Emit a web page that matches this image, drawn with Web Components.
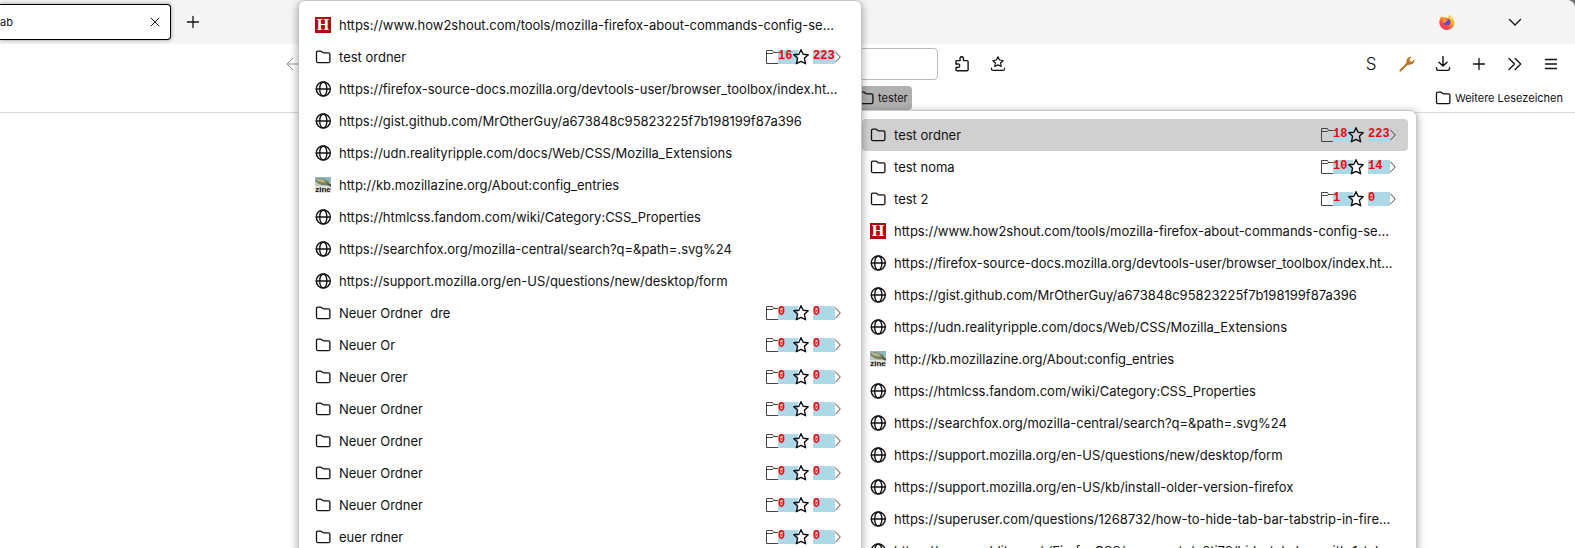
<!DOCTYPE html>
<html lang="de">
<head>
<meta charset="utf-8">
<title>Lesezeichen</title>
<style>
    html { background: #6e6e6e; }
    body {
        margin: 0;
        height: 100vh;
        overflow: hidden;
        position: relative;
        background: #fff;
        border-top-right-radius: 8px;
        font-family: Inter, "Liberation Sans", sans-serif;
        font-size: 13px;
        color: #111;
    }
    bookmark-menu.sub { left: 298px; top: 0; z-index: 2; }
    bookmark-menu.main { left: 853px; top: 110px; z-index: 1; }
</style>
</head>
<body>
    <tab-strip>ab</tab-strip>
    <nav-bar></nav-bar>
    <bookmarks-bar></bookmarks-bar>

    <bookmark-menu class="main">
        <bookmark-folder folders="18" links="223" active>test ordner</bookmark-folder>
        <bookmark-folder folders="10" links="14">test noma</bookmark-folder>
        <bookmark-folder folders="1" links="0">test 2</bookmark-folder>
        <bookmark-link icon="shout">https://www.how2shout.com/tools/mozilla-firefox-about-commands-config-se…</bookmark-link>
        <bookmark-link>https://firefox-source-docs.mozilla.org/devtools-user/browser_toolbox/index.ht…</bookmark-link>
        <bookmark-link>https://gist.github.com/MrOtherGuy/a673848c95823225f7b198199f87a396</bookmark-link>
        <bookmark-link>https://udn.realityripple.com/docs/Web/CSS/Mozilla_Extensions</bookmark-link>
        <bookmark-link icon="zine">http://kb.mozillazine.org/About:config_entries</bookmark-link>
        <bookmark-link>https://htmlcss.fandom.com/wiki/Category:CSS_Properties</bookmark-link>
        <bookmark-link>https://searchfox.org/mozilla-central/search?q=&amp;path=.svg%24</bookmark-link>
        <bookmark-link>https://support.mozilla.org/en-US/questions/new/desktop/form</bookmark-link>
        <bookmark-link>https://support.mozilla.org/en-US/kb/install-older-version-firefox</bookmark-link>
        <bookmark-link>https://superuser.com/questions/1268732/how-to-hide-tab-bar-tabstrip-in-fire…</bookmark-link>
        <bookmark-link>https://www.reddit.com/r/FirefoxCSS/comments/q8ti78/hide_tab_bar_with_1_tab…</bookmark-link>
    </bookmark-menu>

    <bookmark-menu class="sub">
        <bookmark-link icon="shout">https://www.how2shout.com/tools/mozilla-firefox-about-commands-config-se…</bookmark-link>
        <bookmark-folder folders="16" links="223">test ordner</bookmark-folder>
        <bookmark-link>https://firefox-source-docs.mozilla.org/devtools-user/browser_toolbox/index.ht…</bookmark-link>
        <bookmark-link>https://gist.github.com/MrOtherGuy/a673848c95823225f7b198199f87a396</bookmark-link>
        <bookmark-link>https://udn.realityripple.com/docs/Web/CSS/Mozilla_Extensions</bookmark-link>
        <bookmark-link icon="zine">http://kb.mozillazine.org/About:config_entries</bookmark-link>
        <bookmark-link>https://htmlcss.fandom.com/wiki/Category:CSS_Properties</bookmark-link>
        <bookmark-link>https://searchfox.org/mozilla-central/search?q=&amp;path=.svg%24</bookmark-link>
        <bookmark-link>https://support.mozilla.org/en-US/questions/new/desktop/form</bookmark-link>
        <bookmark-folder folders="0" links="0">Neuer Ordner  dre</bookmark-folder>
        <bookmark-folder folders="0" links="0">Neuer Or</bookmark-folder>
        <bookmark-folder folders="0" links="0">Neuer Orer</bookmark-folder>
        <bookmark-folder folders="0" links="0">Neuer Ordner</bookmark-folder>
        <bookmark-folder folders="0" links="0">Neuer Ordner</bookmark-folder>
        <bookmark-folder folders="0" links="0">Neuer Ordner</bookmark-folder>
        <bookmark-folder folders="0" links="0">Neuer Ordner</bookmark-folder>
        <bookmark-folder folders="0" links="0">euer rdner</bookmark-folder>
    </bookmark-menu>

<script>
const stroke = (width) => `fill="none" stroke="currentColor" stroke-width="${width}" stroke-linecap="round" stroke-linejoin="round"`;

const icons = {
    folder: `<path ${stroke(1.3)} d="M1.500 12.200V3.600q0-1.400 1.400-1.400h2.900q.7 0 1.200.6l.7.8q.3.300.8.300h5q1.400 0 1.400 1.400v6.900q0 1.500-1.400 1.500H2.900q-1.400 0-1.400-1.500z"/>`,
    globe: `<g ${stroke(1.4)}><circle cx="8.300" cy="8" r="7"/><ellipse cx="8.300" cy="8" rx="3.600" ry="7"/><path d="M1.300 8h14"/></g>`,
    shout: `<path fill="#b4060c" d="M0 0h16v16H0z"/><text x="8" y="13" text-anchor="middle" font-family="Liberation Serif, serif" font-weight="bold" font-size="16" fill="#fff">H</text>`,
    zine: `<path fill="#8fb6c4" d="M0 0h16v7H0z"/><path fill="#bccbc9" d="M0 5h16v5H0z"/><path fill="#e6e3de" d="M0 9h16v7H0z"/>
        <ellipse cx="7.500" cy="4.800" rx="7" ry="3.200" fill="#77825a" transform="rotate(14 7.500 4.800)"/><ellipse cx="6" cy="3.600" rx="4.600" ry="1.400" fill="#b3b48c" transform="rotate(14 6 3.600)"/><path fill="#4f5b40" d="M12 6l4 1v3l-4-2z"/>
        <text x="8" y="15" text-anchor="middle" font-family="Liberation Sans, sans-serif" font-weight="bold" font-size="8" fill="#111">zine</text>`,
    close: `<path ${stroke(1)} d="M4 4l8 8M12 4l-8 8"/>`,
    plus: `<path ${stroke(1.3)} d="M8 2.500v11M2.500 8h11"/>`,
    back: `<path ${stroke(1)} d="M6.500 2.500L1 8l5.500 5.500M1 8h15"/>`,
    puzzle: `<path ${stroke(1.4)} d="M2 8.200V5.600q0-1 1-1h2.700c.5 0 .7-.5.500-.9-.6-1.300-.1-2.900 1.500-2.900s2.200 1.600 1.600 2.900c-.2.400 0 .9.500.9h3.300q1 0 1 1v8.200q0 1-1 1H3q-1 0-1-1v-1.900c0-.5.4-.7.900-.6 1.500.5 2.800-.1 2.800-1.600S4.400 7.500 2.900 8c-.5.200-.9.500-.9.200z"/>`,
    saved: `<g ${stroke(1.2)}><path d="M8 .8l1.600 3.200 3.500.5-2.500 2.500.6 3.500L8 8.900l-3.200 1.600.6-3.500-2.500-2.500 3.500-.5z"/><path d="M1.500 12.200v.7q0 1.500 1.500 1.500h10q1.500 0 1.500-1.500v-.7"/></g>`,
    wrench: `<path fill="none" stroke="#ba7420" stroke-width="2.200" stroke-linecap="round" d="M1.500 14.500l7-7"/><path fill="#ba7420" d="M12.800.8l-2.300 2.500.3 2 2.100.4 2.400-2.400c.5 3-1.400 5.400-4.300 5.200l-2 .8-2-2 .6-1.900C7.200 2.800 9.600.300 12.800.800z"/>`,
    download: `<path ${stroke(1.4)} d="M8 .6v9.400M4 6.200l4 3.900 4-3.900M1.500 11.700v1q0 1.700 1.700 1.700h9.600q1.700 0 1.700-1.700v-1"/>`,
    more: `<path ${stroke(1.3)} d="M2 2.500L7.500 8 2 13.500M8.200 2.500L13.700 8l-5.500 5.500"/>`,
    menu: `<path ${stroke(1.3)} d="M2.500 3.500h11M2.500 8h11M2.500 12.500h11"/>`,
    down: `<path ${stroke(1.3)} d="M2.500 5.500L8 11l5.500-5.500"/>`,
    star: `<path ${stroke(1.4)} d="M8 .7l2.100 4.500 5.100.6-3.800 3.500 1.200 5.400L8 12.300l-4.600 2.400 1.200-5.400L.8 5.800l5.100-.6z"/>`,
    firefox: `<defs><linearGradient id="fx" x1=".9" y1=".1" x2=".2" y2="1"><stop offset="0" stop-color="#fff04a"/><stop offset=".35" stop-color="#ffae1f"/><stop offset=".65" stop-color="#ff5a38"/><stop offset="1" stop-color="#ef1f72"/></linearGradient></defs>
        <path fill="url(#fx)" d="M10.500.200c1.200.8 1.800 1.900 2.100 2.900 1.600 1 3 3 3 5.300A7.500 7.500 0 0 1 8 15.900 7.600 7.600 0 0 1 .3 8.200C.3 6 1.200 4.200 2.200 3l.5-1 .9 1.300c1-.4 1.800-.4 2.700-.1L9 4z"/>
        <circle cx="8" cy="8.100" r="3.500" fill="#7140d8"/><path fill="#ff9b22" d="M3.500 5.300c1.300-1 3-.9 4 .2l2 .3c-.1.900-1.800 1.200-2.400 1.700-.6.600-.1 1.500-1.500 1.400-1.300-.1-2-1.600-2.100-3.600z"/>`
};

class FxIcon extends HTMLElement {
    constructor() {
        super();
        this.attachShadow({ mode: "open" });
    }

    connectedCallback() {
        this.shadowRoot.innerHTML = `
            <style>
                :host { display: block; flex: none; width: 16px; height: 16px; }
                svg { display: block; width: 100%; height: 100%; }
            </style>
            <svg viewBox="0 0 16 16" aria-hidden="true">${icons[this.getAttribute("name")]}</svg>
        `;
    }
}

// Todos los botones comparten este reset
const controls = `
    button {
        display: flex;
        align-items: center;
        justify-content: center;
        padding: 0;
        border: 0;
        background: none;
        font: inherit;
        color: inherit;
    }
`;

class TabStrip extends HTMLElement {
    constructor() {
        super();
        this.attachShadow({ mode: "open" });
    }

    connectedCallback() {
        this.shadowRoot.innerHTML = `
            <style>
                ${controls}
                :host {
                    display: flex;
                    align-items: center;
                    height: 44px;
                    background: #f5f5f5;
                    border-top-right-radius: 8px;
                    font-size: 11px;
                }
                .tab {
                    display: flex;
                    align-items: center;
                    justify-content: space-between;
                    box-sizing: border-box;
                    width: 171px;
                    height: 36px;
                    padding-right: 7px;
                    border: 1px solid #000;
                    border-left: 0;
                    border-radius: 0 4px 4px 0;
                    background: #fff;
                    box-shadow: 0 0 4px rgba(0, 0, 0, .4);
                    color: #15141a;
                }
                .tab button { width: 16px; height: 16px; }
                .new { width: 43px; height: 32px; }
                .spring { flex: 1; }
                .app { margin-right: 44px; }
                .list { width: 32px; height: 32px; margin-right: 44px; }
            </style>
            <div class="tab"><span><slot></slot></span><button aria-label="Tab schließen"><fx-icon name="close"></fx-icon></button></div>
            <button class="new" aria-label="Neuer Tab"><fx-icon name="plus"></fx-icon></button>
            <div class="spring"></div>
            <fx-icon class="app" name="firefox"></fx-icon>
            <button class="list" aria-label="Alle Tabs"><fx-icon name="down"></fx-icon></button>
        `;
    }
}

class NavBar extends HTMLElement {
    constructor() {
        super();
        this.attachShadow({ mode: "open" });
    }

    connectedCallback() {
        this.shadowRoot.innerHTML = `
            <style>
                ${controls}
                :host { display: flex; align-items: center; height: 40px; padding-right: 6px; }
                button { flex: none; width: 36px; height: 32px; }
                .spring { flex: 274; }
                .rest { flex: 334; }
                input {
                    flex: 614;
                    min-width: 0;
                    box-sizing: border-box;
                    height: 32px;
                    margin-right: 6px;
                    border: 1px solid #bbb;
                    border-radius: 4px;
                    background: #fff;
                    font: inherit;
                }
                .back { color: #999; }
                .style { font-size: 17px; font-weight: 300; }
            </style>
            <div class="spring"></div>
            <button class="back" aria-label="Zurück"><fx-icon name="back"></fx-icon></button>
            <input type="text" aria-label="Adresse">
            <button aria-label="Erweiterungen"><fx-icon name="puzzle"></fx-icon></button>
            <button aria-label="Lesezeichen"><fx-icon name="saved"></fx-icon></button>
            <div class="rest"></div>
            <button class="style">S</button>
            <button aria-label="Werkzeuge"><fx-icon name="wrench"></fx-icon></button>
            <button aria-label="Downloads"><fx-icon name="download"></fx-icon></button>
            <button aria-label="Neuer Tab"><fx-icon name="plus"></fx-icon></button>
            <button aria-label="Weitere Werkzeuge"><fx-icon name="more"></fx-icon></button>
            <button aria-label="Menü"><fx-icon name="menu"></fx-icon></button>
        `;
    }
}

class BookmarksBar extends HTMLElement {
    constructor() {
        super();
        this.attachShadow({ mode: "open" });
    }

    connectedCallback() {
        this.shadowRoot.innerHTML = `
            <style>
                ${controls}
                :host {
                    display: flex;
                    justify-content: space-between;
                    padding: 2px 8px 2px 854px;
                    border-bottom: 1px solid #d8d8d8;
                    font-size: 11px;
                }
                button { height: 24px; gap: 4px; padding: 0 4px; border-radius: 4px; white-space: nowrap; }
                .open { background: #b0b0b0; }
            </style>
            <button class="open"><fx-icon name="folder"></fx-icon>tester</button>
            <button><fx-icon name="folder"></fx-icon>Weitere Lesezeichen</button>
        `;
    }
}

class BookmarkMenu extends HTMLElement {
    constructor() {
        super();
        this.attachShadow({ mode: "open" });
    }

    connectedCallback() {
        this.shadowRoot.innerHTML = `
            <style>
                :host {
                    display: block;
                    position: absolute;
                    box-sizing: border-box;
                    width: 564px;
                    padding: 8px;
                    border: 1px solid #c8c8c8;
                    border-radius: 7px;
                    background: #fff;
                    box-shadow: 0 2px 9px rgba(0, 0, 0, .38);
                }
            </style>
            <slot></slot>
        `;
    }
}

const row = `
    :host { display: block; }
    .row {
        display: flex;
        align-items: center;
        box-sizing: border-box;
        width: 100%;
        height: 32px;
        padding: 0 12px 0 8px;
        border-radius: 4px;
        color: inherit;
        text-decoration: none;
    }
    .label { flex: 1; margin-left: 8px; text-align: left; white-space: pre; }
`;

class BookmarkLink extends HTMLElement {
    constructor() {
        super();
        this.attachShadow({ mode: "open" });
    }

    connectedCallback() {
        const icon = this.getAttribute("icon") || "globe";
        this.shadowRoot.innerHTML = `
            <style>${row}</style>
            <a class="row" href="#"><fx-icon name="${icon}"></fx-icon><span class="label"><slot></slot></span></a>
        `;
    }
}

class BookmarkFolder extends HTMLElement {
    constructor() {
        super();
        this.attachShadow({ mode: "open" });
    }

    connectedCallback() {
        this.shadowRoot.innerHTML = `
            <style>
                ${controls}
                ${row}
                :host([active]) .row { background: #d0d0d0; }
                .counts { display: flex; align-items: center; }
                .counts svg { display: block; flex: none; fill: none; stroke: #444; }
                .num {
                    width: 22px;
                    height: 14px;
                    background: #add8e6;
                    color: #f00;
                    font: bold 12px/13px "Liberation Mono", monospace;
                    text-align: left;
                }
                .folders { width: 20px; }
                .star { position: relative; margin: 0 4px 0 -5px; }
            </style>
            <button class="row">
                <fx-icon name="folder"></fx-icon>
                <span class="label"><slot></slot></span>
                <span class="counts">
                    <svg width="12" height="14" viewBox="0 0 12 14"><path d="M12 13.500H.5V.5h6l1 2H12M.5 3.500h6l1-1"/></svg>
                    <span class="num folders">${this.getAttribute("folders")}</span>
                    <fx-icon class="star" name="star"></fx-icon>
                    <span class="num">${this.getAttribute("links")}</span>
                    <svg width="6" height="14" viewBox="0 0 6 14"><path d="M0 1.500L5.300 7 0 12.500"/></svg>
                </span>
            </button>
        `;
    }
}

customElements.define("fx-icon", FxIcon);
customElements.define("tab-strip", TabStrip);
customElements.define("nav-bar", NavBar);
customElements.define("bookmarks-bar", BookmarksBar);
customElements.define("bookmark-menu", BookmarkMenu);
customElements.define("bookmark-link", BookmarkLink);
customElements.define("bookmark-folder", BookmarkFolder);
</script>
</body>
</html>
